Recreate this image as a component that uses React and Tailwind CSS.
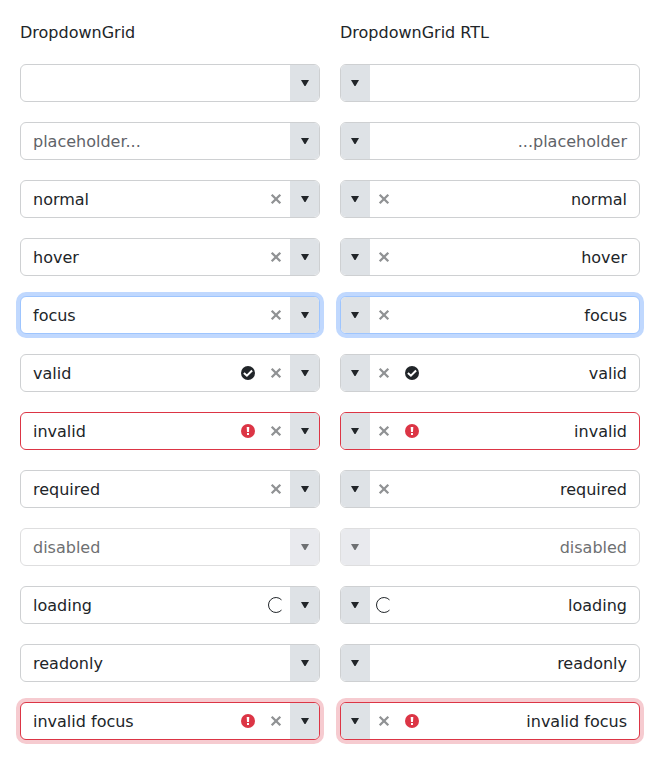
import clsx from "clsx";

const rows = [
  { text: "" },
  { text: "placeholder...", placeholder: true },
  { text: "normal", clear: true },
  { text: "hover", clear: true },
  { text: "focus", clear: true, focus: true },
  { text: "valid", clear: true, valid: true },
  { text: "invalid", clear: true, invalid: true },
  { text: "required", clear: true },
  { text: "disabled", disabled: true },
  { text: "loading", loading: true },
  { text: "readonly" },
  { text: "invalid focus", clear: true, invalid: true, focus: true },
];

function IconBox({ children }) {
  return <span className="flex w-7 shrink-0 items-center justify-center">{children}</span>;
}

function ValidIcon() {
  return (
    <svg width="14" height="14" viewBox="0 0 14 14">
      <circle cx="7" cy="7" r="7" fill="#212529" />
      <path d="M2.9 6.9 5.9 9.7 11.1 4.5" fill="none" stroke="#fff" strokeWidth="2" />
    </svg>
  );
}

function InvalidIcon() {
  return (
    <svg width="14" height="14" viewBox="0 0 14 14">
      <circle cx="7" cy="7" r="7" fill="#dc3545" />
      <path d="M5.7 3h2.6L8 8H6zM6 9h2v2H6z" fill="#fff" />
    </svg>
  );
}

function ClearIcon() {
  return (
    <svg width="12" height="12" viewBox="0 0 12 12">
      <path d="M1.7 1.7 10.3 10.3M10.3 1.7 1.7 10.3" stroke="#909294" strokeWidth="2.3" />
    </svg>
  );
}

function LoadingIcon() {
  return (
    <svg width="16" height="16" viewBox="0 0 16 16">
      <path d="M13.5 2.9A7.5 7.5 0 1 0 13.5 13.1" fill="none" stroke="#212529" strokeWidth="1" />
    </svg>
  );
}

function Dropdown({ row }) {
  const { text, placeholder, clear, focus, valid, invalid, disabled, loading } = row;
  return (
    <div
      className={clsx(
        "flex h-[38px] rounded-md border bg-white",
        invalid ? "border-[#dc3545]" : focus ? "border-[#9ec5fe]" : disabled ? "border-[#dededf]" : "border-[#ced0d2]",
        focus && (invalid ? "ring-4 ring-[#f6cbd0]" : "ring-4 ring-[#c0d8fe]"),
      )}
    >
      <span
        className={clsx(
          "flex-1 px-3 pt-px leading-9",
          placeholder && "text-[#5f6369]",
          disabled && "text-[#6e7072]",
        )}
      >
        {text}
      </span>
      {valid && <IconBox><ValidIcon /></IconBox>}
      {invalid && <IconBox><InvalidIcon /></IconBox>}
      {clear && <IconBox><ClearIcon /></IconBox>}
      {loading && <IconBox><LoadingIcon /></IconBox>}
      <span
        className={clsx(
          "flex w-[29px] shrink-0 items-center justify-center rounded-e-[5px] ps-px",
          disabled ? "bg-[#e9eaee] text-[#6e7072]" : "bg-[#dee2e6]",
        )}
      >
        <svg width="8" height="6" viewBox="0 0 8 6">
          <path d="M0 0H8L4.5 6H3.5Z" fill="currentColor" />
        </svg>
      </span>
    </div>
  );
}

function Column({ title, dir }) {
  return (
    <section className="w-[300px]">
      <h2 className="mb-5 h-6 pt-px leading-6">{title}</h2>
      <div dir={dir} className="flex flex-col gap-5">
        {rows.map((row, i) => <Dropdown key={i} row={row} />)}
      </div>
    </section>
  );
}

export default function App() {
  return (
    <main className="flex h-[760px] gap-5 bg-white p-5 font-['DejaVu_Sans',sans-serif] text-base text-[#212529]">
      <Column title="DropdownGrid" dir="ltr" />
      <Column title="DropdownGrid RTL" dir="rtl" />
    </main>
  );
}
